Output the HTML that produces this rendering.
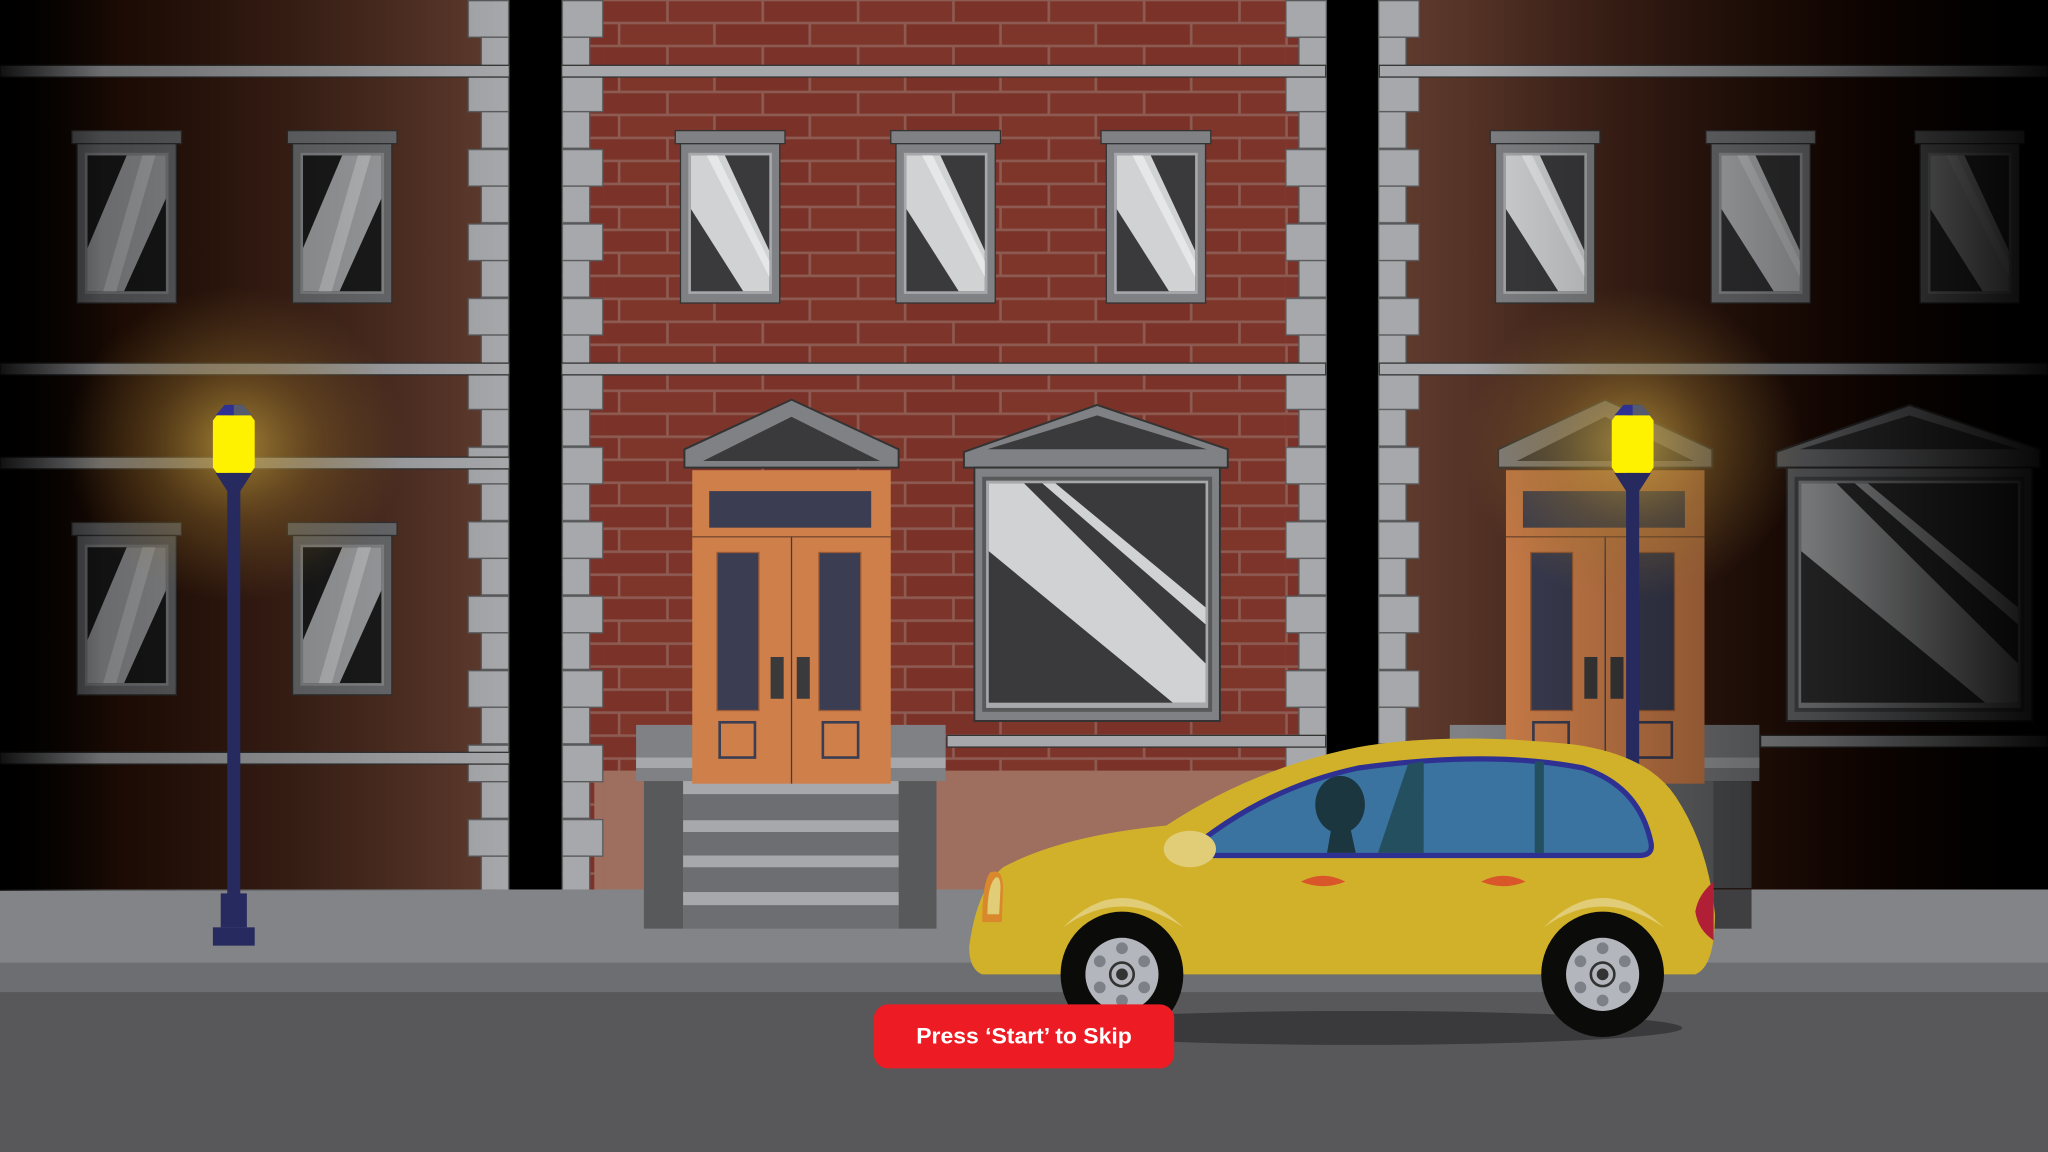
<!DOCTYPE html>
<html><head><meta charset="utf-8"><style>
html,body{margin:0;padding:0;width:2048px;height:1152px;overflow:hidden;background:#000}
svg{display:block}
</style></head><body>
<svg width="2048" height="1152" viewBox="0 0 1568 882" preserveAspectRatio="none" xmlns="http://www.w3.org/2000/svg">
<defs>
<pattern id="brick" x="0" y="0" width="146" height="35.2" patternUnits="userSpaceOnUse">
<rect width="146" height="35.2" fill="#8d5b52"/>
<rect x="1" y="1" width="71" height="15.6" fill="#7b3329"/>
<rect x="74" y="1" width="71" height="15.6" fill="#7d352b"/>
<rect x="-36" y="18.6" width="71" height="15.6" fill="#7a3128"/>
<rect x="37" y="18.6" width="71" height="15.6" fill="#7e362b"/>
<rect x="110" y="18.6" width="71" height="15.6" fill="#7a3128"/>
</pattern>
<linearGradient id="lb" x1="0" x2="1"><stop offset="0" stop-color="#000"/><stop offset="0.25" stop-color="#2a1106"/><stop offset="1" stop-color="#623d30"/></linearGradient>
<linearGradient id="rb" x1="0" x2="1"><stop offset="0" stop-color="#623d30"/><stop offset="0.7" stop-color="#210a02"/><stop offset="1" stop-color="#000"/></linearGradient>
<linearGradient id="lshade" x1="0" x2="1"><stop offset="0" stop-color="#000" stop-opacity="0.9"/><stop offset="0.2" stop-color="#000" stop-opacity="0.35"/><stop offset="1" stop-color="#000" stop-opacity="0"/></linearGradient>
<linearGradient id="rshade" x1="0" x2="1"><stop offset="0" stop-color="#000" stop-opacity="0"/><stop offset="0.6" stop-color="#000" stop-opacity="0.45"/><stop offset="1" stop-color="#000" stop-opacity="0.95"/></linearGradient>
<radialGradient id="glow"><stop offset="0" stop-color="#c9a440" stop-opacity="0.75"/><stop offset="0.5" stop-color="#a07a30" stop-opacity="0.35"/><stop offset="1" stop-color="#8a6a30" stop-opacity="0"/></radialGradient>
<pattern id="quoin" x="0" y="0" width="32" height="57" patternUnits="userSpaceOnUse">
<rect x="0.5" y="0.5" width="31" height="28" fill="#a7a8ab" stroke="#58595b" stroke-width="1"/>
<rect x="10.5" y="28.5" width="21" height="28" fill="#a7a8ab" stroke="#58595b" stroke-width="1"/>
</pattern>
<pattern id="quoinL" x="0" y="0" width="32" height="57" patternUnits="userSpaceOnUse">
<rect x="0.5" y="0.5" width="31" height="28" fill="#a7a8ab" stroke="#58595b" stroke-width="1"/>
<rect x="0.5" y="28.5" width="21" height="28" fill="#a7a8ab" stroke="#58595b" stroke-width="1"/>
</pattern>
<g id="winA">
<rect x="0" y="0" width="84" height="10" fill="#6d6e71" stroke="#333" stroke-width="1"/>
<rect x="4" y="10" width="76" height="122" fill="#6d6e71" stroke="#333" stroke-width="1"/>
<rect x="10" y="17" width="64" height="108" fill="#8a8b8d"/>
<rect x="12" y="19" width="60" height="104" fill="#1b1b1b"/>
<polygon points="42,19 72,19 72,52 40,123 12,123 12,90" fill="#a4a5a8"/>
<polygon points="54,19 64,19 34,123 24,123" fill="#bfc0c2"/>
</g>
<g id="winB">
<rect x="0" y="0" width="84" height="10" fill="#808184" stroke="#333" stroke-width="1"/>
<rect x="4" y="10" width="76" height="122" fill="#808184" stroke="#333" stroke-width="1"/>
<rect x="10" y="17" width="64" height="108" fill="#a7a8ab"/>
<rect x="12" y="19" width="60" height="104" fill="#3a3a3c"/>
<polygon points="12,19 38,19 72,92 72,123 52,123 12,60" fill="#d1d2d4"/>
<polygon points="24,19 32,19 72,100 72,112" fill="#e6e7e8"/>
</g>
<g id="door">
<polygon points="-6,34 -6,20 76,-18 158,20 158,34" fill="#808184" stroke="#333" stroke-width="1.5"/>
<polygon points="4,30 76,-6 148,30" fill="#3a3a3c" stroke="#808184" stroke-width="2"/>
<rect x="0" y="36" width="152" height="240" fill="#cf7f4a"/>
<rect x="13" y="52" width="124" height="28" fill="#3b3d52"/>
<line x1="0" y1="87" x2="152" y2="87" stroke="#7a4a30" stroke-width="1"/>
<line x1="76" y1="87" x2="76" y2="276" stroke="#3b3d52" stroke-width="1"/>
<rect x="19" y="99" width="32" height="121" fill="#3b3d52" stroke="#9a5a35" stroke-width="1"/>
<rect x="97" y="99" width="32" height="121" fill="#3b3d52" stroke="#9a5a35" stroke-width="1"/>
<rect x="21" y="229" width="27" height="27" fill="none" stroke="#3b3d52" stroke-width="2"/>
<rect x="100" y="229" width="27" height="27" fill="none" stroke="#3b3d52" stroke-width="2"/>
<rect x="60" y="179" width="10" height="32" fill="#3a3a3c"/>
<rect x="80" y="179" width="10" height="32" fill="#3a3a3c"/>
</g>
<g id="bigwin">
<polygon points="-2,36 -2,24 100,-12 200,22 200,36" fill="#808184" stroke="#333" stroke-width="1.5"/>
<polygon points="16,22 100,-4 184,22" fill="#3a3a3c"/>
<rect x="6" y="36" width="188" height="194" fill="#808184" stroke="#333" stroke-width="1.5"/>
<rect x="12" y="43" width="176" height="180" fill="#58595b"/>
<rect x="15" y="46" width="170" height="174" fill="#a7a8ab"/>
<rect x="17" y="48" width="166" height="168" fill="#3a3a3c"/>
<polygon points="17,48 44,48 183,186 183,216 158,216 17,100" fill="#d1d2d4"/>
<polygon points="58,48 68,48 183,143 183,156" fill="#d1d2d4"/>
</g>
<g id="lamp">
<rect x="-5" y="0" width="10" height="380" fill="#262a5e"/>
<rect x="-10" y="374" width="20" height="26" fill="#262a5e"/>
<rect x="-16" y="400" width="32" height="14" fill="#262a5e"/>
<polygon points="-14,52 14,52 5,66 -5,66" fill="#262a5e"/>
<polygon points="-14,8 -7,0 7,0 14,8" fill="#2e3192"/>
<polygon points="0,0 7,0 14,8 0,8" fill="#555a6e"/>
<polygon points="-16,12 -13,8 13,8 16,12 16,48 13,52 -13,52 -16,48" fill="#fff200"/>
</g>
<g id="wheel">
<ellipse cx="0" cy="0" rx="47" ry="48" fill="#0b0b09"/>
<circle cx="0" cy="0" r="28" fill="#b3b6bc"/>
<g fill="#7d8087"><circle cx="0" cy="-20" r="4.5"/><circle cx="0" cy="20" r="4.5"/><circle cx="-17" cy="-10" r="4.5"/><circle cx="17" cy="-10" r="4.5"/><circle cx="-17" cy="10" r="4.5"/><circle cx="17" cy="10" r="4.5"/></g>
<circle cx="0" cy="0" r="9" fill="none" stroke="#333" stroke-width="2"/>
<circle cx="0" cy="0" r="4.5" fill="#333"/>
</g>
</defs>

<rect x="0" y="0" width="392" height="682" fill="url(#lb)"/>
<rect x="390" y="0" width="42" height="682" fill="#000"/>
<rect x="430" y="0" width="587" height="682" fill="url(#brick)"/>
<rect x="455" y="590" width="560" height="92" fill="#9e6e5e"/>
<rect x="1015" y="0" width="42" height="682" fill="#000"/>
<rect x="1055" y="0" width="513" height="682" fill="url(#rb)"/>

<g transform="translate(358,0)"><rect x="0" y="0" width="32" height="682" fill="url(#quoin)"/></g>
<g transform="translate(430,0)"><rect x="0" y="0" width="32" height="682" fill="url(#quoinL)"/></g>
<g transform="translate(984,0)"><rect x="0" y="0" width="32" height="590" fill="url(#quoin)"/></g>
<g transform="translate(1055,0)"><rect x="0" y="0" width="32" height="682" fill="url(#quoinL)"/></g>

<g fill="#a7a8ab" stroke="#333" stroke-width="1">
<rect x="0" y="50" width="390" height="9"/>
<rect x="0" y="278" width="390" height="9"/>
<rect x="0" y="350" width="390" height="9"/>
<rect x="0" y="576" width="390" height="9"/>
<rect x="430" y="50" width="585" height="9"/>
<rect x="430" y="278" width="585" height="9"/>
<rect x="1056" y="50" width="512" height="9"/>
<rect x="1056" y="278" width="512" height="9"/>
<rect x="725" y="563" width="290" height="9"/>
<rect x="1348" y="563" width="220" height="9"/>
</g>

<use href="#winA" x="55" y="100"/>
<use href="#winA" x="220" y="100"/>
<use href="#winA" x="55" y="400"/>
<use href="#winA" x="220" y="400"/>
<use href="#winB" x="517" y="100"/>
<use href="#winB" x="682" y="100"/>
<use href="#winB" x="843" y="100"/>
<use href="#winB" x="1141" y="100"/>
<use href="#winB" x="1306" y="100"/>
<use href="#winB" x="1466" y="100"/>

<rect x="0" y="681" width="1568" height="57" fill="#838487"/>
<rect x="0" y="737" width="1568" height="23" fill="#6d6e71"/>
<rect x="0" y="760" width="1568" height="122" fill="#58585a"/>

<rect x="487" y="555" width="237" height="43" fill="#808184"/>
<rect x="487" y="580" width="237" height="8" fill="#a7a8ab"/>
<rect x="493" y="598" width="30" height="113" fill="#58595b"/>
<rect x="688" y="598" width="29" height="113" fill="#58595b"/>
<rect x="523" y="598" width="165" height="113" fill="#6d6e71"/>
<g fill="#a7a8ab"><rect x="523" y="598" width="165" height="10"/><rect x="523" y="628" width="165" height="9"/><rect x="523" y="655" width="165" height="9"/><rect x="523" y="683" width="165" height="10"/></g>
<use href="#door" x="530" y="324"/>
<use href="#bigwin" x="740" y="322"/>

<rect x="1110" y="555" width="237" height="43" fill="#808184"/>
<rect x="1110" y="580" width="237" height="8" fill="#a7a8ab"/>
<rect x="1312" y="598" width="29" height="82" fill="#58595b"/>
<rect x="1146" y="598" width="166" height="82" fill="#6d6e71"/>
<use href="#door" x="1153" y="324"/>
<use href="#bigwin" x="1362" y="322"/>

<rect x="0" y="0" width="392" height="682" fill="url(#lshade)"/>
<rect x="1120" y="0" width="448" height="681" fill="url(#rshade)"/>
<rect x="1312" y="681" width="29" height="30" fill="#3f3f41"/>
<rect x="1290" y="681" width="22" height="30" fill="#555557"/>

<ellipse cx="180" cy="340" rx="130" ry="120" fill="url(#glow)"/>
<ellipse cx="1250" cy="340" rx="130" ry="120" fill="url(#glow)"/>

<use href="#lamp" x="179" y="310"/>
<use href="#lamp" x="1250" y="310"/>

<ellipse cx="1040" cy="787" rx="248" ry="13" fill="#3a3a3c"/>
<path d="M752 746 L1298 746 Q1313 740 1313 700 Q1308 648 1283 610 Q1262 578 1205 570 Q1110 560 1040 572 Q960 588 893 632 Q812 640 768 664 Q748 680 742 725 Q742 742 752 746 Z" fill="#d2b12a"/>
<path d="M906 655 Q965 604 1040 588 Q1140 574 1212 588 Q1255 602 1264 645 Q1266 655 1255 655 Z" fill="#3a73a0" stroke="#2e3192" stroke-width="4"/>
<path d="M1055 653 L1078 585 L1090 583 L1090 653 Z" fill="#244f5e"/>
<rect x="1175" y="583" width="7" height="70" fill="#244f5e"/>
<ellipse cx="1026" cy="616" rx="19" ry="22" fill="#1c3640"/>
<path d="M1020 630 L1033 630 L1038 653 L1016 653 Z" fill="#1c3640"/>
<ellipse cx="911" cy="650" rx="20" ry="14" fill="#e1cd77"/>
<path d="M996 675 Q1013 666 1030 675 Q1013 682 996 675 Z" fill="#d9562b"/>
<path d="M1134 675 Q1151 666 1168 675 Q1151 682 1134 675 Z" fill="#d9562b"/>
<path d="M758 668 Q768 664 768 680 L767 706 L752 706 Q752 676 758 668 Z" fill="#d9892b"/>
<path d="M762 672 Q766 670 766 680 L765 700 L756 700 Q756 678 762 672 Z" fill="#e1cd77"/>
<path d="M1312 675 Q1300 685 1298 698 Q1300 712 1312 720 Z" fill="#b01f36"/>
<path d="M814 710 Q858 665 906 710 Q858 678 814 710 Z" fill="#e1cd77"/>
<path d="M1182 710 Q1226 665 1274 710 Q1226 678 1182 710 Z" fill="#e1cd77"/>
<use href="#wheel" x="859" y="746"/>
<use href="#wheel" x="1227" y="746"/>

<rect x="669" y="769" width="230" height="49" rx="11" fill="#ed1c24"/>
<text x="784" y="799" text-anchor="middle" font-family="Liberation Sans, sans-serif" font-weight="bold" font-size="17" fill="#fff" textLength="165" lengthAdjust="spacingAndGlyphs">Press ‘Start’ to Skip</text>
</svg>
</body></html>
